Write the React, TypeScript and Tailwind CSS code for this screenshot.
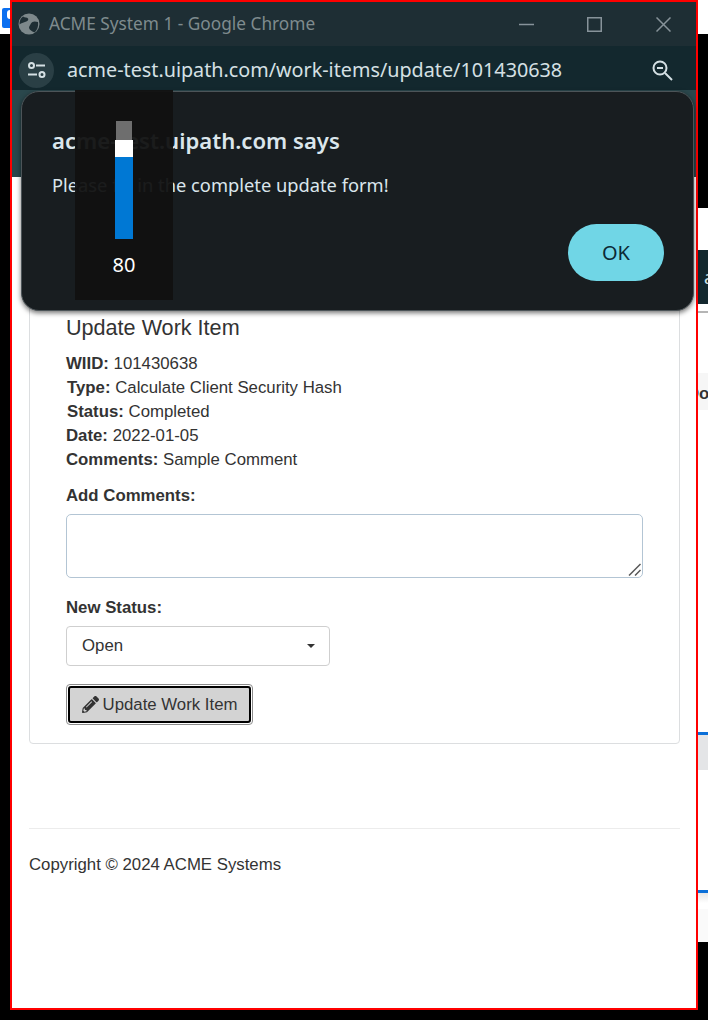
import { FaPencilAlt } from "react-icons/fa";

function Field({ label, value, cls }: { label: string; value: string; cls?: string }) {
  return (
    <div className={"h-6 leading-6 " + (cls ?? "")}>
      <span className="font-bold">{label}</span> {value}
    </div>
  );
}

function LeftStrip() {
  return (
    <div className="w-[10px] shrink-0 flex flex-col">
      <div className="h-[34px] bg-white pt-[8px] pl-[2px]">
        <div className="h-5 w-2 bg-[#0b6ff0] rounded-l-[2px] flex justify-end pt-[2px]">
          <div className="h-[9px] w-[3px] bg-white rounded-l-full" />
        </div>
      </div>
    </div>
  );
}

function RightStrip() {
  return (
    <div className="w-[10px] shrink-0 flex flex-col overflow-hidden">
      <div className="h-[34px] bg-white" />
      <div className="h-[174px] bg-black" />
      <div className="h-[42px] bg-white" />
      <div className="h-[54px] bg-[#13282e] flex items-center text-[#cfe0e4] text-[18px] pl-[6px] font-['Noto_Sans',sans-serif]">a</div>
      <div className="h-[7px] bg-white" />
      <div className="h-[2px] bg-[#b5b5b5]" />
      <div className="h-[60px] bg-white" />
      <div className="h-[37px] bg-[#f6f6f6] pt-[9px] leading-6 text-[16.800px] font-bold text-[#333333] whitespace-nowrap font-['Liberation_Sans',sans-serif] -indent-[11px]">Do</div>
      <div className="h-[322px] bg-white" />
      <div className="h-[3px] bg-[#0b6fd8]" />
      <div className="h-[35px] bg-[#e4e5e7]" />
      <div className="h-[120px] bg-white" />
      <div className="h-[3px] bg-[#0b6fd8]" />
      <div className="h-[10px] bg-gradient-to-b from-[#e6e6e6] to-white" />
      <div className="h-[6px] bg-white" />
      <div className="h-[33px] bg-[#fafafa]" />
    </div>
  );
}

function TitleBar() {
  return (
    <div className="h-[44px] bg-[#1e2e34] flex items-center pl-[6px] shrink-0 font-['Noto_Sans',sans-serif]">
      <svg width="22" height="22" viewBox="0 0 22 22" className="shrink-0">
        <circle cx="11" cy="11" r="10.500" fill="#7d888b" />
        <path d="M5 3.500c2 1.500 4 .5 5 2s-1 3-3 3.500-3.500 1-5.500 2.500C1.500 8 2.500 5 5 3.500z" fill="#1e2e34" />
        <path d="M20 9c-2-.5-4-1-5.500 0s-2 2.500-3 4-.5 3 1.500 4.500 3 2 4 1.500c2-2 3.500-5 3-10z" fill="#1e2e34" />
      </svg>
      <span className="ml-[9px] -mt-[1px] text-[17.250px] text-[#7f8b8e] whitespace-nowrap">ACME System 1 - Google Chrome</span>
      <div className="ml-auto flex items-center pr-[25px]">
        <svg width="15" height="15" viewBox="0 0 15 15" className="mr-[53px]"><path d="M0 7.500h15" stroke="#87939a" strokeWidth="1.500" /></svg>
        <svg width="15" height="15" viewBox="0 0 15 15" className="mr-[54px]"><rect x=".75" y=".75" width="13.500" height="13.500" fill="none" stroke="#87939a" strokeWidth="1.500" /></svg>
        <svg width="15" height="15" viewBox="0 0 15 15"><path d="M.5.500l14 14M14.500.500l-14 14" stroke="#87939a" strokeWidth="1.500" /></svg>
      </div>
    </div>
  );
}

function AddressBar() {
  return (
    <div className="h-[44px] bg-[#13282e] flex items-center pt-[4px] pl-[7px] pr-[23px] shrink-0 font-['Noto_Sans',sans-serif]">
      <div className="w-[35px] h-[35px] rounded-full bg-[#2a3f45] flex items-center justify-center shrink-0">
        <svg width="20" height="16" viewBox="0 0 20 16" fill="none" stroke="#d5e0e4" strokeWidth="2">
          <circle cx="4.500" cy="3.500" r="2.500" />
          <path d="M9 3.500h9" />
          <path d="M1 12.500h9" />
          <circle cx="15" cy="12.500" r="2.500" />
        </svg>
      </div>
      <span className="ml-[13px] text-[19.750px] text-[#d5e0e4] whitespace-nowrap">acme-test.uipath.com/work-items/update/101430638</span>
      <svg className="ml-auto" width="21" height="21" viewBox="0 0 21 21" fill="none" stroke="#d5e0e4" strokeWidth="2">
        <circle cx="8" cy="8" r="6.500" />
        <path d="M5 8h6" />
        <path d="M13 13l7 7" />
      </svg>
    </div>
  );
}

function Dialog() {
  return (
    <div className="absolute left-[9px] top-[89px] w-[673px] h-[220px] rounded-[18px] bg-[#181d20] border border-[#4c5458] shadow-[0_2px_5px_rgba(0,0,0,0.55)] font-['Noto_Sans',sans-serif] px-[30px] pt-[31px]">
      <div className="text-[22.100px] leading-[34px] font-semibold text-[#dbe6ec] whitespace-nowrap">acme-test.uipath.com says</div>
      <div className="mt-[15px] text-[18.300px] leading-[26px] text-[#dbe6ec] whitespace-nowrap">Please fill in the complete update form!</div>
      <div className="flex justify-end mt-[26px] -mr-[1px]">
        <div className="w-[96px] h-[57px] rounded-full bg-[#70d6e6] flex items-center justify-center text-[20px] text-[#0c2a35]">OK</div>
      </div>
    </div>
  );
}

function VolumeOsd() {
  return (
    <div className="absolute left-[63px] top-[88px] w-[98px] h-[210px] bg-[#111111]/95 flex flex-col items-center pt-[31px] font-['Noto_Sans',sans-serif]">
      <div className="w-[16px] h-[19px] bg-[#6e6e6e]" />
      <div className="w-[18px] h-[17px] bg-white" />
      <div className="w-[18px] h-[82px] bg-[#0078d4]" />
      <div className="mt-[12px] text-[20px] leading-[28px] text-white">80</div>
    </div>
  );
}

export default function App() {
  return (
    <div className="w-[708px] h-[1020px] bg-black flex items-start overflow-hidden">
      <LeftStrip />
      <div className="relative w-[688px] h-[1010px] border-2 border-[#ff0000] bg-white flex flex-col shrink-0 font-['Liberation_Sans',sans-serif] text-[#333333]">
        <TitleBar />
        <AddressBar />
        <div className="h-[87px] bg-[#2a474c] shrink-0" />
        <div className="pl-[17px] pr-[16px] pt-[113px] flex-1">
          <div className="h-[454px] border border-[#dcdee0] rounded-[4px] pl-[36px] pr-[36px] flex flex-col">
            <div className="mt-[25px] text-[21.600px] leading-[24px]">Update Work Item</div>
            <div className="mt-[12px] text-[16.800px]">
              <Field label="WIID:" value="101430638" />
              <Field label="Type:" value="Calculate Client Security Hash" cls="pl-[1px]" />
              <Field label="Status:" value="Completed" cls="pl-[1px]" />
              <Field label="Date:" value="2022-01-05" />
              <Field label="Comments:" value="Sample Comment" />
            </div>
            <div className="mt-[12px] h-6 leading-6 text-[16.800px] font-bold">Add Comments:</div>
            <div className="relative mt-[6px] w-[577px] h-[64px]">
              <textarea className="h-full w-full block resize-none border border-[#b3c5d4] rounded-[5px] bg-white outline-none" readOnly />
              <svg className="absolute right-[2px] bottom-[2px]" width="13" height="13" viewBox="0 0 13 13" fill="none" stroke="#555555" strokeWidth="1.500">
                <path d="M1 12.500L12.500 1" />
                <path d="M7 12.500L12.500 7" />
              </svg>
            </div>
            <div className="mt-[18px] h-6 leading-6 text-[16.800px] font-bold">New Status:</div>
            <div className="mt-[6px] w-[264px] h-[40px] border border-[#cfcfcf] rounded-[4px] flex items-center pl-[15px] pr-[14px] text-[16.800px]">
              <span>Open</span>
              <span className="ml-auto w-0 h-0 border-x-[4px] border-x-transparent border-t-[4px] border-t-[#333333]" />
            </div>
            <div className="mt-[18px] w-[187px] h-[41px] rounded-[4px] border border-[#8c8c8c] p-[1px]">
              <div className="h-full rounded-[3px] border-2 border-black bg-[#d3d3d3] flex items-center justify-center gap-[4px] text-[16.800px]">
                <FaPencilAlt className="text-[17px] text-[#333333]" />
                <span>Update Work Item</span>
              </div>
            </div>
          </div>
          <div className="mt-[84px] h-px bg-[#ececec]" />
          <div className="mt-[24px] text-[16.800px] leading-6">Copyright © 2024 ACME Systems</div>
        </div>
        <Dialog />
        <VolumeOsd />
      </div>
      <RightStrip />
    </div>
  );
}
